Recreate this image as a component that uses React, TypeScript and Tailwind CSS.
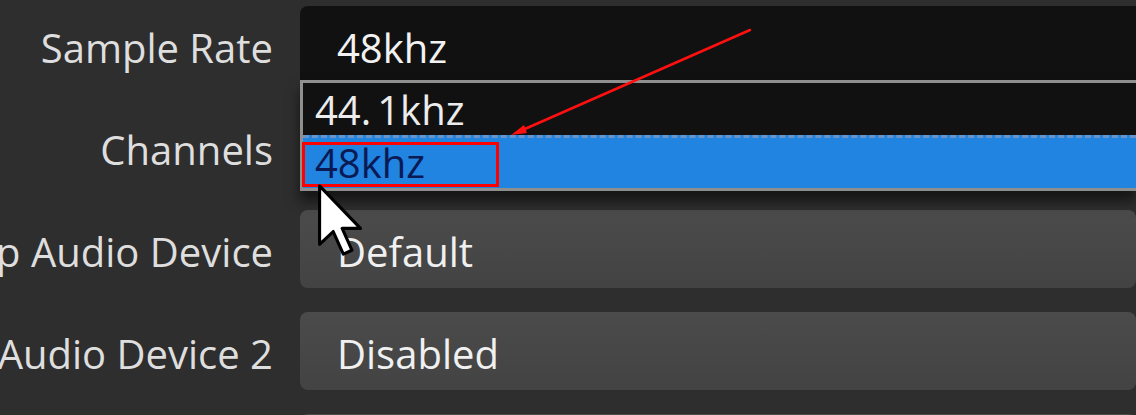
const rows = [
  { label: "Sample Rate", value: "48khz", dark: true },
  { label: "Channels", value: "", dark: false },
  { label: "Desktop Audio Device", value: "Default", dark: false },
  { label: "Desktop Audio Device 2", value: "Disabled", dark: false },
  { label: "", value: "", dark: false },
];

function Cursor() {
  return (
    <svg
      className="absolute left-[316px] top-[184px]"
      width="50"
      height="74"
      viewBox="0 0 12 19"
    >
      <path
        d="M0.5 0.5 L0.5 15.5 L4 12.2 L6.6 18 L8.8 17 L6.3 11.4 L11 11.4 Z"
        fill="#ffffff"
        stroke="#000000"
        strokeWidth="0.8"
        strokeLinejoin="round"
      />
    </svg>
  );
}

export default function App() {
  return (
    <div
      className="relative w-full h-[415px] overflow-hidden bg-[#2e2e2e] text-[40px] leading-none"
      style={{ fontFamily: '"Open Sans", "Noto Sans", sans-serif' }}
    >
      <div className="flex flex-col gap-[24px] pt-[6px]">
        {rows.map((row, i) => (
          <div key={i} className="flex items-center h-[78px] shrink-0">
            <div className="w-[273px] shrink-0 flex justify-end whitespace-nowrap text-[#dedede] pt-[6px]">
              {row.label}
            </div>
            <div
              className={
                row.dark
                  ? "ml-[27px] flex-1 h-full flex items-center pl-[37px] rounded-tl-lg bg-[#111111] text-[#f2f2f2]"
                  : "ml-[27px] flex-1 h-full flex items-center pl-[37px] rounded-lg bg-gradient-to-b from-[#4b4b4b] to-[#434343] text-[#f0f0f0]"
              }
            >
              <span className="pt-[6px]">{row.value}</span>
            </div>
          </div>
        ))}
      </div>

      {/* open dropdown list */}
      <div className="absolute left-[300px] right-0 top-[80px] h-[111px] border-[3px] border-r-0 border-[#8f8f8f] bg-[#111111] flex flex-col shadow-[0_10px_12px_rgba(0,0,0,0.55)]">
        <div className="h-[52px] flex items-center pl-[12px] text-[#ececec]">
          <span className="pt-[2px]">
            44.<span className="ml-[6px]">1khz</span>
          </span>
        </div>
        <div className="flex-1 flex items-center pl-[12px] bg-[#2084e0] border-t-[3px] border-dashed border-[#6a94c8] text-[#0a1a55]">
          <span>48khz</span>
        </div>
      </div>

      {/* annotation */}
      <div className="absolute left-[302px] top-[142px] w-[197px] h-[45px] border-[3px] border-[#ff0000]" />
      <svg className="absolute inset-0 pointer-events-none" width="1136" height="415">
        <line x1="750" y1="30" x2="518" y2="132" stroke="#ff1010" strokeWidth="2.5" strokeLinecap="round" />
        <path d="M511 135 L524 125 L527 133 Z" fill="#ff1010" />
      </svg>
      <Cursor />
    </div>
  );
}
